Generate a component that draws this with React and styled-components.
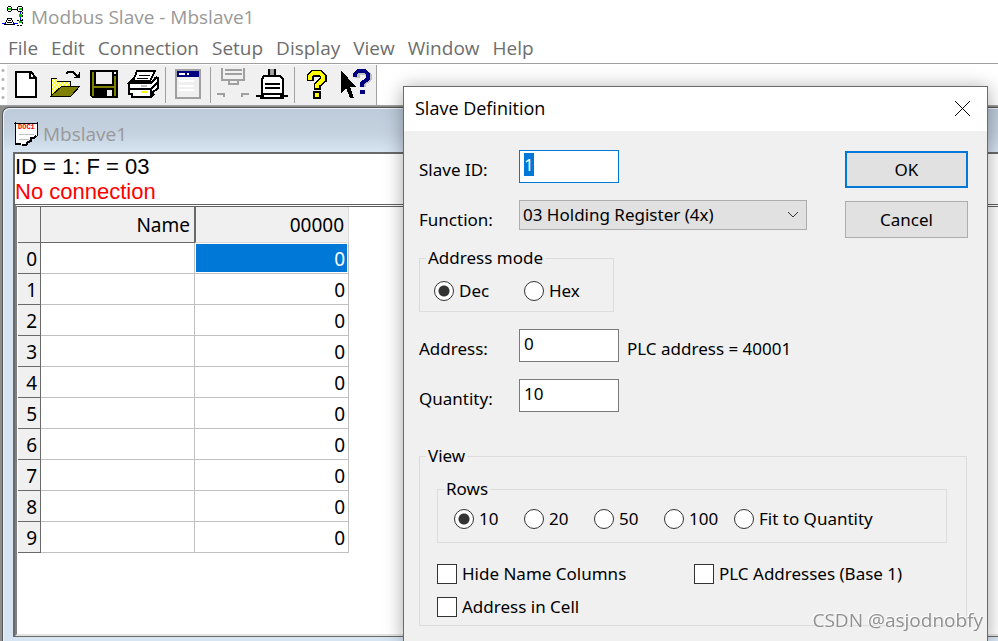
import React, { useEffect, useRef, useState } from 'react';
import styled, { createGlobalStyle } from 'styled-components';


const GlobalStyle = createGlobalStyle`
    * {
        box-sizing: border-box;
    }
    body {
        margin: 0;
        background: #fff;
        color: #000;
        font-family: 'Noto Sans', 'Open Sans', sans-serif;
        overflow: hidden;
    }
    button, input, select {
        font: inherit;
        color: inherit;
    }
`

const Window = styled.div`
    display: flex;
    flex-direction: column;
    height: 100vh;
`

const TitleBar = styled.header`
    display: flex;
    align-items: center;
    gap: 7px;
    height: 34px;
    padding-left: 2px;
    color: #999;
    font-family: 'Open Sans', sans-serif;
    font-size: 19px;
`

const MenuBar = styled.nav`
    display: flex;
    align-items: center;
    gap: 13px;
    height: 30px;
    padding: 0 8px 2px;
    border-bottom: 1px solid #a0a0a0;
`

const MenuItem = styled.button`
    padding: 0;
    border: none;
    background: transparent;
    color: #6d6d6d;
    font-family: 'Open Sans', sans-serif;
    font-size: 19px;
    line-height: 26px;
`

const ToolBar = styled.div`
    display: flex;
    height: 41px;
    padding-top: 1px;
`

const Grip = styled.div`
    width: 7px;
    padding: 2px;
    background: radial-gradient(circle, #b4b4b4 1px, transparent 2px) 0 1px / 6px 9px repeat-y;
`

const Tools = styled.div`
    display: flex;
    background: #f0f0f0;
    border-right: 1px solid #a0a0a0;
`

const ToolButton = styled.button`
    display: flex;
    justify-content: center;
    width: 39px;
    padding: 3px 0;
    border: none;
    background: transparent;
`

const Separator = styled.div`
    width: 6px;
    margin: 2px 0;
    background: linear-gradient(#a0a0a0, #a0a0a0) 2px 0 / 1px 100% no-repeat;
`

const Workspace = styled.main`
    display: flex;
    flex: 1;
    min-height: 0;
    padding: 1px 0 0 2px;
    background: #8e8e8e;
    border-top: 1px solid #a0a0a0;
`

const Child = styled.section`
    display: flex;
    flex: 1;
    flex-direction: column;
    min-width: 0;
    padding: 0 0 4px 10px;
    border-top: 1px solid #555;
    border-left: 1px solid #555;
    border-top-left-radius: 7px;
    background: linear-gradient(#bccbda, #c5d2e0 26px, #d7e4f2 44px);
    box-shadow: inset 1px 1px 0 #eef3f8;
`

const ChildTitle = styled.div`
    display: flex;
    align-items: center;
    gap: 5px;
    height: 44px;
    padding: 8px 1px 0;
    color: #999;
    font-family: 'Open Sans', sans-serif;
    font-size: 19px;
`

const Client = styled.div`
    display: flex;
    flex: 1;
    flex-direction: column;
    border: 2px solid #696969;
    border-right: none;
    border-bottom-width: 1px;
    background: #fff;
`

const Status = styled.div`
    height: 50px;
    font-family: 'Liberation Sans', Arial, sans-serif;
    font-size: 22px;
    line-height: 25px;
`

const Connection = styled.div`
    color: #f00;
`

const GridPane = styled.div`
    flex: 1;
    border-top: 3px double #606060;
    border-left: 2px solid #808080;
    border-bottom: 2px solid #e3e3e3;
    padding-left: 1px;
`

const Grid = styled.table`
    width: 331px;
    border-spacing: 0;
    table-layout: fixed;
    font-size: 19px;
    line-height: 28px;
    text-align: right;
`

const HeadCell = styled.th`
    width: ${({ $width }) => $width}px;
    height: 36px;
    padding: 0 4px 0 0;
    border-right: 1px solid ${({ $active }) => ($active ? '#dcdcdc' : '#696969')};
    border-bottom: 1px solid ${({ $active }) => ($active ? '#dcdcdc' : '#696969')};
    border-left: ${({ $active }) => ($active ? '1px solid #696969' : 'none')};
    background: #f0f0f0;
    font-weight: 400;
`

const IndexCell = styled.th`
    height: 31px;
    padding: 2px 3px 0 0;
    border-right: 1px solid #696969;
    border-bottom: 1px solid #696969;
    background: #f0f0f0;
    font-weight: 400;
`

const Cell = styled.td`
    height: 31px;
    padding: 2px 3px 0 0;
    border-right: 1px solid #c0c0c0;
    border-bottom: 1px solid #c0c0c0;
    background: ${({ $selected }) => ($selected ? '#0078d7' : '#fff')};
    color: ${({ $selected }) => ($selected ? '#fff' : '#000')};
    box-shadow: inset 0 0 0 1px #fff;
`

const Dialog = styled.section`
    position: absolute;
    top: 86px;
    right: 10px;
    width: 585px;
    min-height: calc(100vh - 86px);
    border: 1px solid #6b6b6b;
    border-bottom: none;
    background: #f0f0f0;
    box-shadow: 0 2px 18px rgba(0, 0, 0, 0.35);
    font-size: 17px;
    line-height: 24px;
`

const DialogTitle = styled.div`
    display: flex;
    align-items: center;
    justify-content: space-between;
    height: 44px;
    padding: 0 16px 2px 11px;
    background: #fff;
    font-family: 'Open Sans', sans-serif;
    font-size: 18px;
`

const CloseButton = styled.button`
    display: flex;
    padding: 0;
    border: none;
    background: transparent;
`

const DialogBody = styled.form`
    display: flex;
    flex-direction: column;
    padding: 19px 19px 0 15px;
`

const Top = styled.div`
    display: flex;
    justify-content: space-between;
`

const Fields = styled.div`
    display: flex;
    flex-direction: column;
    gap: 17px;
`

const Field = styled.div`
    display: flex;
    align-items: flex-start;
`

const Label = styled.label`
    width: 100px;
    padding-top: 8px;
`

const Note = styled.span`
    padding: 8px 0 0 8px;
`

const TextBox = styled.input`
    width: 100px;
    height: 33px;
    padding: 0 4px 4px;
    border: 1px solid #7a7a7a;
    border-radius: 0;
    background: #fff;

    &:focus {
        border-color: #0078d7;
        outline: none;
    }

    &::selection {
        background: #0078d7;
        color: #fff;
    }
`

const SelectWrap = styled.div`
    display: grid;
    width: 288px;
    height: 30px;

    > * {
        grid-area: 1 / 1;
    }
    svg {
        align-self: center;
        justify-self: end;
        margin-right: 8px;
        pointer-events: none;
    }
`

const Select = styled.select`
    appearance: none;
    padding: 0 24px 0 3px;
    border: 1px solid #adadad;
    border-radius: 0;
    background: #e1e1e1;
`

const Actions = styled.div`
    display: flex;
    flex-direction: column;
    gap: 13px;
    padding-top: 1px;
`

const ActionButton = styled.button`
    width: 123px;
    height: 37px;
    border: ${({ $primary }) => ($primary ? '2px solid #0078d7' : '1px solid #adadad')};
    background: #e1e1e1;
`

const Group = styled.fieldset`
    min-width: 0;
    width: ${({ $width }) => $width || 'auto'};
    margin: ${({ $margin }) => $margin || '0'};
    padding: ${({ $padding }) => $padding};
    border: 1px solid #dcdcdc;
`

const Legend = styled.legend`
    margin-left: ${({ $indent }) => $indent || 6}px;
    padding: 0 2px;
`

const Options = styled.div`
    display: grid;
    grid-template-columns: ${({ $columns }) => $columns};
    row-gap: 9px;
`

const Option = styled.label`
    display: flex;
    align-items: center;
    gap: 5px;
    white-space: nowrap;
`

const Radio = styled.input`
    appearance: none;
    flex: none;
    width: 20px;
    height: 20px;
    margin: 0;
    border: 1px solid #333;
    border-radius: 50%;
    background: #fff;

    &:checked {
        background: radial-gradient(circle, #333 5px, #fff 6px);
    }
`

const CheckBox = styled.input`
    appearance: none;
    flex: none;
    width: 20px;
    height: 20px;
    margin: 0;
    border: 1px solid #333;
    background: #fff;

    &:checked {
        background: #333;
        box-shadow: inset 0 0 0 4px #fff;
    }
`

const Watermark = styled.div`
    position: fixed;
    right: 15px;
    bottom: 8px;
    color: #909090;
    font-family: 'Open Sans', sans-serif;
    font-size: 19px;
    line-height: 26px;
    text-shadow: -1px -1px 0 #fff;
    pointer-events: none;
`


const Icon = ({ children, size = 33 }) => (
    <svg width={size} height={size} viewBox={`0 0 ${size} ${size}`} fill="none" shapeRendering="crispEdges" aria-hidden="true">
        {children}
    </svg>
)

const AppIcon = () => (
    <Icon size={22}>
        <path d="M8 3H17" stroke="#000" strokeWidth="1" />
        <path d="M6 1H9V5H6ZM16 1H20V5H16Z" fill="#fff" />
        <path d="M6 0H9V1H6ZM6 5H9V6H6ZM5 1H6V5H5ZM9 1H10V5H9ZM16 0H20V1H16ZM16 5H20V6H16ZM15 1H16V5H15ZM20 1H21V5H20Z" fill="#000" />
        <path d="M6 2H9V4H6ZM17 2H20V4H17ZM17 8H20V11H17ZM17 15H20V17H17Z" fill="#00c800" />
        <path d="M18 6V8M18 11V14M0 17H6M10 17H16" stroke="#00f" strokeWidth="1" />
        <path d="M20 6V12M20 13V19H15M15 14H20" stroke="#000" strokeWidth="1" strokeDasharray="2 1" />
        <path d="M6 12H9L12 18H3Z" fill="#fff" stroke="#000" />
        <path d="M6 14H9M5 16H10M2 18H12" stroke="#000" />
    </Icon>
)

const DocIcon = () => (
    <Icon size={24}>
        <path d="M1 1H23V14L20 16H18V19L14 20L12 23H8L5 22H1Z" fill="#fff" />
        <path d="M1 0V23M0 1H23M23 0V14" stroke="#000" strokeWidth="1" />
        <path d="M22 14L20 16H17V19L14 20L12 23H8M1 22H7" stroke="#000" strokeWidth="2" />
        <path d="M5 12H20M5 17H15" stroke="#c0c0c0" />
        <text x="4" y="7" fill="#f00" fontFamily="Liberation Mono, monospace" fontSize="7" fontWeight="700">DOC1</text>
    </Icon>
)

const NewIcon = () => (
    <Icon>
        <path d="M6 4H21L26 10V29H6Z" fill="#fff" stroke="#000" strokeWidth="2" />
        <path d="M20 4V10H26" stroke="#000" strokeWidth="2" />
    </Icon>
)

const OpenIcon = () => (
    <Icon>
        <defs>
            <pattern id="folder" width="4" height="4" patternUnits="userSpaceOnUse">
                <rect width="4" height="4" fill="#ff0" />
                <path d="M0 0H2V2H0ZM2 2H4V4H2Z" fill="#fff" />
            </pattern>
        </defs>
        <path d="M2 28V11L4 10H8L10 13H21V18H13L2 28Z" fill="url(#folder)" />
        <path d="M2 28V11M2 10H8M8 13H21V18" stroke="#000" strokeWidth="1" />
        <path d="M13 18H31L22 28H2Z" fill="#808000" stroke="#000" strokeWidth="1" />
        <path d="M17 6L19 4H24L29 9" stroke="#000" strokeWidth="2" />
        <path d="M31 4V10H25V9L29 8L30 4Z" fill="#000" />
    </Icon>
)

const SaveIcon = () => (
    <Icon>
        <path d="M2 2H30V30H4L2 28Z" fill="#000" />
        <path d="M4 4H6V28H4ZM26 8H28V28H26ZM6 18H26V20H6Z" fill="#808000" />
        <path d="M8 4H24V16H8Z" fill="#f0f0f0" />
        <path d="M26 4H28V6H26Z" fill="#fff" />
        <path d="M19 22H24V28H19Z" fill="#f0f0f0" />
    </Icon>
)

const PrintIcon = () => (
    <Icon>
        <path d="M3 13L9 11H24L31 10V20L25 29H4L1 26V15Z" fill="#fff" />
        <path d="M10 3H28L23 13H6Z" fill="#fff" stroke="#000" strokeWidth="2" />
        <path d="M12 7H23M10 10H21" stroke="#000" strokeWidth="1" />
        <path d="M6 11L2 15H24L30 9M2 14V26H5V29H24L27 26M24 21H2M24 21L31 14M25 25L31 20V10H27M24 28V21" stroke="#000" strokeWidth="2" />
        <path d="M14 17H20V19H14Z" fill="#c0c0c0" />
        <path d="M14 23H20V25H14Z" fill="#ff0" />
    </Icon>
)

const WindowIcon = () => (
    <Icon>
        <path d="M4 2H28V30H4Z" fill="#f0f0f0" stroke="#a0a0a0" strokeWidth="2" />
        <path d="M5 3H27V9H5Z" fill="#000080" />
        <path d="M7 5H13V7H7ZM15 5H17V7H15ZM7 12H22V14H7ZM7 17H22V19H7ZM7 21H22V23H7Z" fill="#fff" />
    </Icon>
)

const DisconnectIcon = () => (
    <Icon>
        <path d="M5 0V12H27V0M8 2H25M8 6H25M12 12V16H21V12M0 26H7V29M32 26H25V29" stroke="#a0a0a0" strokeWidth="2" />
    </Icon>
)

const ConnectIcon = () => (
    <Icon>
        <path d="M12 1H20V8H12Z" fill="#000" />
        <path d="M14 1H18V7H14Z" fill="#a0a0a0" />
        <path d="M8 8H24L27 11V26H6V11Z" fill="#fff" stroke="#000" strokeWidth="2" />
        <path d="M9 16H24M9 20H24M0 28H32" stroke="#000" strokeWidth="2" />
        <path d="M4 27H28V31H4Z" fill="#000" />
        <path d="M8 27H24V29H8Z" fill="#fff" />
    </Icon>
)

const HelpIcon = () => (
    <Icon>
        <path d="M9 13V8L12 5H19L22 8V12L16 17V22" stroke="#000" strokeWidth="7" />
        <path d="M12 23H20V31H12Z" fill="#000" />
        <path d="M9 12V8L12 5H19L22 8V12L16 17V20" stroke="#ff0" strokeWidth="4" />
        <path d="M14 25H18V29H14Z" fill="#ff0" />
    </Icon>
)

const ContextHelpIcon = () => (
    <Icon>
        <path d="M17 10V7L19 4H25L29 7V11L23 16V19" stroke="#c0c0c0" strokeWidth="5" />
        <path d="M15 9V6L18 3H25L28 6V11L22 15V19" stroke="#000080" strokeWidth="4" />
        <path d="M20 22H25V26H20Z" fill="#000080" />
        <path d="M1 2V25L6 20L10 30H14L10 19H16Z" fill="#000" />
    </Icon>
)

const CloseIcon = () => (
    <svg width="17" height="17" viewBox="0 0 17 17" aria-hidden="true">
        <path d="M1 1L16 16M16 1L1 16" stroke="#000" strokeWidth="1" />
    </svg>
)

const Chevron = () => (
    <svg width="12" height="8" viewBox="0 0 12 8" aria-hidden="true">
        <path d="M1 1L6 6L11 1" fill="none" stroke="#333" strokeWidth="1" />
    </svg>
)


const menus = ['File', 'Edit', 'Connection', 'Setup', 'Display', 'View', 'Window', 'Help'];

const toolGroups = [
    [['New', NewIcon], ['Open', OpenIcon], ['Save', SaveIcon], ['Print', PrintIcon]],
    [['Slave definition', WindowIcon]],
    [['Disconnect', DisconnectIcon], ['Connect', ConnectIcon]],
    [['About', HelpIcon], ['Context help', ContextHelpIcon]],
];

const registers = [0, 0, 0, 0, 0, 0, 0, 0, 0, 0];

const RadioSet = ({ name, options, initial, columns }) => {
    const [value, setValue] = useState(initial);

    return (
        <Options $columns={columns}>
            {options.map((option) => (
                <Option key={option}>
                    <Radio type="radio" name={name} checked={value === option} onChange={() => setValue(option)} />
                    {option}
                </Option>
            ))}
        </Options>
    )
}

const RegisterGrid = () => (
    <Grid>
        <thead>
            <tr>
                <HeadCell $width={23} />
                <HeadCell $width={154}>Name</HeadCell>
                <HeadCell $width={154} $active>00000</HeadCell>
            </tr>
        </thead>
        <tbody>
            {registers.map((value, i) => (
                <tr key={i}>
                    <IndexCell>{i}</IndexCell>
                    <Cell />
                    <Cell $selected={i === 0}>{value}</Cell>
                </tr>
            ))}
        </tbody>
    </Grid>
)

const SlaveDefinition = () => {
    const idRef = useRef(null);

    useEffect(() => {
        idRef.current.focus();
        idRef.current.select();
    }, []);

    return (
        <Dialog role="dialog" aria-labelledby="dialog-title">
            <DialogTitle>
                <span id="dialog-title">Slave Definition</span>
                <CloseButton type="button" aria-label="Close">
                    <CloseIcon />
                </CloseButton>
            </DialogTitle>
            <DialogBody onSubmit={(e) => e.preventDefault()}>
                <Top>
                    <Fields>
                        <Field>
                            <Label htmlFor="slave-id">Slave ID:</Label>
                            <TextBox id="slave-id" ref={idRef} defaultValue="1" />
                        </Field>
                        <Field>
                            <Label htmlFor="function">Function:</Label>
                            <SelectWrap>
                                <Select id="function">
                                    <option>03 Holding Register (4x)</option>
                                </Select>
                                <Chevron />
                            </SelectWrap>
                        </Field>
                    </Fields>
                    <Actions>
                        <ActionButton type="submit" $primary>OK</ActionButton>
                        <ActionButton type="button">Cancel</ActionButton>
                    </Actions>
                </Top>
                <Group $width="195px" $margin="8px 0 17px" $padding="9px 14px 8px">
                    <Legend $indent={-8}>Address mode</Legend>
                    <RadioSet name="mode" options={['Dec', 'Hex']} initial="Dec" columns="90px auto" />
                </Group>
                <Fields>
                    <Field>
                        <Label htmlFor="address">Address:</Label>
                        <TextBox id="address" defaultValue="0" />
                        <Note>PLC address = 40001</Note>
                    </Field>
                    <Field>
                        <Label htmlFor="quantity">Quantity:</Label>
                        <TextBox id="quantity" defaultValue="10" />
                    </Field>
                </Fields>
                <Group $margin="32px 1px 0 0" $padding="9px 19px 6px 17px">
                    <Legend $indent={-11}>View</Legend>
                    <Group $margin="0 0 19px" $padding="6px 16px 11px">
                        <Legend $indent={-10}>Rows</Legend>
                        <RadioSet
                            name="rows"
                            options={['10', '20', '50', '100', 'Fit to Quantity']}
                            initial="10"
                            columns="70px 70px 70px 70px auto"
                        />
                    </Group>
                    <Options $columns="257px auto">
                        <Option><CheckBox type="checkbox" />Hide Name Columns</Option>
                        <Option><CheckBox type="checkbox" />PLC Addresses (Base 1)</Option>
                        <Option><CheckBox type="checkbox" />Address in Cell</Option>
                    </Options>
                </Group>
            </DialogBody>
        </Dialog>
    )
}

const App = () => {
    return (
        <>
            <GlobalStyle />
            <Window>
                <TitleBar>
                    <AppIcon />
                    Modbus Slave - Mbslave1
                </TitleBar>
                <MenuBar>
                    {menus.map((menu) => (
                        <MenuItem key={menu}>{menu}</MenuItem>
                    ))}
                </MenuBar>
                <ToolBar>
                    <Grip />
                    <Tools>
                        {toolGroups.map((group, i) => (
                            <React.Fragment key={i}>
                                {i > 0 && <Separator />}
                                {group.map(([name, ToolIcon]) => (
                                    <ToolButton key={name} aria-label={name}>
                                        <ToolIcon />
                                    </ToolButton>
                                ))}
                            </React.Fragment>
                        ))}
                    </Tools>
                </ToolBar>
                <Workspace>
                    <Child>
                        <ChildTitle>
                            <DocIcon />
                            Mbslave1
                        </ChildTitle>
                        <Client>
                            <Status>
                                ID = 1: F = 03
                                <Connection>No connection</Connection>
                            </Status>
                            <GridPane>
                                <RegisterGrid />
                            </GridPane>
                        </Client>
                    </Child>
                </Workspace>
            </Window>
            <SlaveDefinition />
            <Watermark>CSDN @asjodnobfy</Watermark>
        </>
    )
}

export default App;
